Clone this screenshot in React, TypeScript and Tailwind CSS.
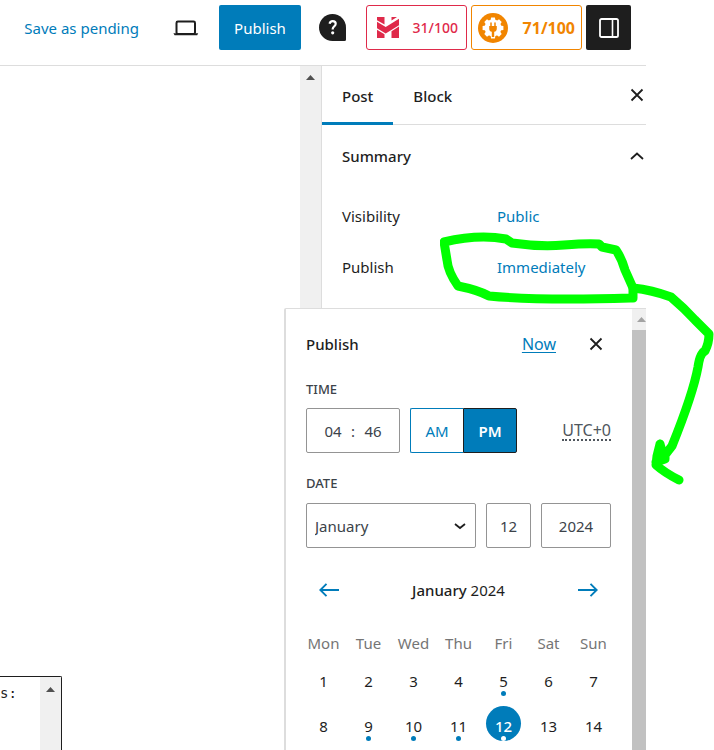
import type { ReactNode } from "react";

const weekdays = ["Mon", "Tue", "Wed", "Thu", "Fri", "Sat", "Sun"];
const days = [1, 2, 3, 4, 5, 6, 7, 8, 9, 10, 11, 12, 13, 14];
const daysWithPosts = [5, 9, 10, 11, 12];
const selectedDay = 12;

const months = [
  "January",
  "February",
  "March",
  "April",
  "May",
  "June",
  "July",
  "August",
  "September",
  "October",
  "November",
  "December",
];

const gearTeeth = [0, 45, 90, 135, 180, 225, 270, 315];

function ScrollArrow({ className = "text-[#505050]" }: { className?: string }) {
  return (
    <svg width="9" height="5" viewBox="0 0 9 5" className={className} fill="currentColor" aria-hidden="true">
      <path d="M4.5 0 9 5H0z" />
    </svg>
  );
}

function CloseIcon() {
  return (
    <svg width="14" height="14" viewBox="0 0 14 14" fill="none" stroke="#1e1e1e" strokeWidth="1.8" aria-hidden="true">
      <path d="M1.5 1.5l11 11M12.5 1.5l-11 11" />
    </svg>
  );
}

function ArrowIcon({ flip = false }: { flip?: boolean }) {
  return (
    <svg
      width="20"
      height="14"
      viewBox="0 0 20 14"
      fill="none"
      stroke="#007cba"
      strokeWidth="1.9"
      className={flip ? "rotate-180" : ""}
      aria-hidden="true"
    >
      <path d="M20 7H1.5M7.5 .8 1.3 7l6.2 6.2" />
    </svg>
  );
}

function LaptopIcon() {
  return (
    <svg width="26" height="16" viewBox="0 0 26 16" aria-hidden="true">
      <rect x="3.5" y="1.5" width="18.5" height="12.5" rx="1.4" fill="none" stroke="#1e1e1e" strokeWidth="2" />
      <path d="M.4 13.2h24.8l-1 2H1.6z" fill="#1e1e1e" />
    </svg>
  );
}

function HelpIcon() {
  return (
    <svg width="27" height="27" viewBox="0 0 27 27" aria-hidden="true">
      <path d="M13.5 0A13.5 13.5 0 0 1 27 13.5V25.5a1.5 1.5 0 0 1-1.5 1.5h-12a13.5 13.5 0 0 1 0-27z" fill="#1e1e1e" />
      <path
        d="M10.6 9.8c.3-1.7 1.4-2.6 3.1-2.6 1.8 0 3 1 3 2.6 0 1.2-.6 1.9-1.5 2.6-1 .8-1.5 1.3-1.5 2.6v.6"
        fill="none"
        stroke="#fff"
        strokeWidth="2.2"
      />
      <circle cx="13.7" cy="18.8" r="1.6" fill="#fff" />
    </svg>
  );
}

function HeadlineIcon() {
  return (
    <svg width="22" height="21" viewBox="0 0 22 21" fill="#df2a4a" aria-hidden="true">
      <path d="M0 0h7.5v7.6L0 3.2z" />
      <path d="M14.5 0H20l-5.5 3.4z" />
      <path d="M0 4.8l8.7 5.2L22 1.8v6.4L8.7 16.4 0 11.2z" />
      <path d="M0 12.8l7.5 4.5V21H0z" />
      <path d="M14.5 14.2 22 9.6V21h-7.5z" />
    </svg>
  );
}

function SeoGearIcon() {
  return (
    <svg width="30" height="30" viewBox="0 0 30 30" aria-hidden="true">
      <circle cx="15" cy="15" r="15" fill="#f18500" />
      <g fill="#fff">
        <circle cx="15" cy="15" r="8.4" />
        {gearTeeth.map((angle) => (
          <path key={angle} d="M12.4 8l.7-3.4h3.8l.7 3.4z" transform={`rotate(${angle} 15 15)`} />
        ))}
      </g>
      <path d="M13 10v4M17 10v4" stroke="#f18500" strokeWidth="1.5" strokeLinecap="round" />
      <path d="M11.2 13h7.6v2.4a3.4 3.4 0 0 1-2.6 3.4V24h-2.4v-5.2a3.4 3.4 0 0 1-2.6-3.4z" fill="#f18500" />
    </svg>
  );
}

function SettingsPanelIcon() {
  return (
    <svg width="20" height="20" viewBox="0 0 20 20" fill="none" stroke="#fff" aria-hidden="true">
      <rect x="1" y="1" width="18" height="18" rx="1.6" strokeWidth="1.8" />
      <path d="M13.5 1v18" strokeWidth="1.6" />
    </svg>
  );
}

function SummaryRow({ label, children }: { label: string; children: ReactNode }) {
  return (
    <div className="flex h-[51px] items-center">
      <span className="w-[155px]">{label}</span>
      <button type="button" className="text-[#007cba]">
        {children}
      </button>
    </div>
  );
}

function EditorHeader() {
  return (
    <header className="flex h-[66px] items-start justify-end border-b border-[#ddd] pt-[5px] pr-[15px]">
      <div className="flex h-[45px] items-center">
        <button type="button" className="text-[#007cba]">
          Save as pending
        </button>
        <button type="button" aria-label="Preview" className="ml-[34px]">
          <LaptopIcon />
        </button>
        <button type="button" className="ml-5 h-[45px] w-[82px] rounded-[2px] bg-[#007cba] text-white">
          Publish
        </button>
        <button type="button" aria-label="Help" className="ml-[18px]">
          <HelpIcon />
        </button>
        <button
          type="button"
          className="ml-5 flex h-[45px] w-[101px] items-center justify-between rounded-[3px] border border-[#df2a4a] pr-2 pl-2.5 text-sm font-medium text-[#df2a4a]"
        >
          <HeadlineIcon />
          31/100
        </button>
        <button
          type="button"
          className="ml-1 flex h-[45px] w-[111px] items-center justify-between rounded-[3px] border border-[#f18500] px-1.5 text-base font-bold text-[#f18500]"
        >
          <SeoGearIcon />
          71/100
        </button>
        <button
          type="button"
          aria-label="Settings"
          className="ml-1 flex h-[45px] w-[45px] items-center justify-center rounded-[2px] bg-[#1e1e1e]"
        >
          <SettingsPanelIcon />
        </button>
      </div>
    </header>
  );
}

function PublishPopover() {
  const field = "h-[45px] rounded-[2px] border border-[#949494]";

  return (
    <section
      aria-label="Publish"
      className="absolute top-[242px] right-0 bottom-0 flex w-[362px] overflow-hidden rounded-tl-[2px] border-t border-l-2 border-[#ddd] bg-white"
    >
      <div className="flex-1 pr-[21px] pl-5">
        <div className="flex h-[70px] items-center">
          <h2 className="flex-1 font-medium">Publish</h2>
          <button type="button" className="mr-[33px] text-base text-[#007cba] underline underline-offset-2">
            Now
          </button>
          <button type="button" aria-label="Close" className="mr-2">
            <CloseIcon />
          </button>
        </div>

        <fieldset>
          <legend className="h-[29px] text-[13px] leading-[20px] font-medium text-[#3c434a]">TIME</legend>
          <div className="flex items-center">
            <div className={`${field} flex w-[94px] items-center justify-center text-[#3c434a]`}>
              <input aria-label="Hours" defaultValue="04" className="w-8 text-center" />
              <span className="w-2 text-center">:</span>
              <input aria-label="Minutes" defaultValue="46" className="w-8 text-center" />
            </div>
            <div className="ml-2.5 flex h-[45px] w-[107px]">
              <button type="button" className="flex-1 rounded-l-[2px] border border-r-0 border-[#007cba] text-[#007cba]">
                AM
              </button>
              <button
                type="button"
                className="flex-1 rounded-r-[2px] border border-[#1e1e1e] bg-[#007cba] font-semibold text-white"
              >
                PM
              </button>
            </div>
            <abbr
              title="Coordinated Universal Time"
              className="ml-auto border-b-2 border-dotted border-[#50575e] text-base leading-[18px] text-[#50575e] no-underline"
            >
              UTC+0
            </abbr>
          </div>
        </fieldset>

        <fieldset className="mt-5">
          <legend className="h-[30px] text-[13px] leading-[20px] font-medium text-[#3c434a]">DATE</legend>
          <div className="flex gap-2.5 text-[#3c434a]">
            <div className="relative flex-1">
              <select aria-label="Month" defaultValue="January" className={`${field} w-full appearance-none bg-white px-2`}>
                {months.map((month) => (
                  <option key={month}>{month}</option>
                ))}
              </select>
              <svg
                width="12"
                height="7"
                viewBox="0 0 12 7"
                className="pointer-events-none absolute top-5 right-2.5"
                fill="none"
                stroke="#1e1e1e"
                strokeWidth="1.8"
                aria-hidden="true"
              >
                <path d="M1 1l5 4 5-4" />
              </svg>
            </div>
            <input aria-label="Day" defaultValue="12" className={`${field} w-[45px] text-center`} />
            <input aria-label="Year" defaultValue="2024" className={`${field} w-[70px] text-center`} />
          </div>
        </fieldset>

        <div className="mt-5 flex h-11 items-center justify-between px-[13px]">
          <button type="button" aria-label="Previous month">
            <ArrowIcon />
          </button>
          <h3>
            <strong className="font-medium">January</strong> 2024
          </h3>
          <button type="button" aria-label="Next month">
            <ArrowIcon flip />
          </button>
        </div>

        <div className="mt-[23px] grid grid-cols-[repeat(7,35px)] justify-between gap-y-2.5">
          {weekdays.map((weekday) => (
            <span key={weekday} className="flex h-4 items-center justify-center text-[#757575]">
              {weekday}
            </span>
          ))}
          {days.map((day) => (
            <button
              key={day}
              type="button"
              className={`relative flex h-[35px] items-center justify-center rounded-full pt-1 ${
                day === selectedDay ? "bg-[#007cba] font-medium text-white" : ""
              }`}
            >
              {day}
              {daysWithPosts.includes(day) && (
                <span
                  className={`absolute bottom-0 left-[15px] size-[5px] rounded-full ${
                    day === selectedDay ? "bg-white" : "bg-[#007cba]"
                  }`}
                />
              )}
            </button>
          ))}
        </div>
      </div>

      <div className="flex w-[14px] flex-col bg-[#f0f0f0]">
        <span className="flex h-[21px] items-center justify-center pl-1">
          <ScrollArrow className="text-[#a3a3a3]" />
        </span>
        <span className="flex-1 bg-[#c1c1c1]" />
      </div>
    </section>
  );
}

function SettingsSidebar() {
  return (
    <aside className="w-[325px] border-l border-[#ddd]">
      <div className="flex h-[59px] items-stretch border-b border-[#ddd]">
        <button type="button" className="-mb-px border-b-[3px] border-[#007cba] px-5 pt-[3px] font-medium">
          Post
        </button>
        <button type="button" className="px-5 pt-0.5 font-medium">
          Block
        </button>
        <button type="button" aria-label="Close settings" className="mr-0.5 ml-auto">
          <CloseIcon />
        </button>
      </div>
      <div className="pr-0.5 pl-5">
        <button type="button" className="flex h-[65px] w-full items-center justify-between pb-1 font-medium">
          Summary
          <svg width="14" height="8" viewBox="0 0 14 8" fill="none" stroke="#1e1e1e" strokeWidth="1.8" aria-hidden="true">
            <path d="M1 7l6-5.5L13 7" />
          </svg>
        </button>
        <SummaryRow label="Visibility">Public</SummaryRow>
        <SummaryRow label="Publish">Immediately</SummaryRow>
      </div>
    </aside>
  );
}

function Annotation() {
  return (
    <svg
      width="274"
      height="254"
      viewBox="440 232 274 254"
      className="pointer-events-none absolute top-[232px] right-0"
      fill="none"
      stroke="#00ff00"
      strokeWidth="9"
      strokeLinecap="round"
      strokeLinejoin="round"
      aria-hidden="true"
    >
      <path d="M444 242Q478 234 506 239L512 243Q540 247 564 245T599 244L602 247L616 250Q622 259 625 270L633 288V298C600 299 540 301 489 296Q478 290 458 286Q448 272 447 260L444 242" />
      <path d="M633 288Q652 290 671 297Q684 308 695 320L709 334Q709 343 705 351Q700 353 698 367Q693 394 672 446L665 455V459L656 462M660 444L657 456L656 465Q665 473 679 480M660 444L664 459" />
    </svg>
  );
}

export default function App() {
  return (
    <div className="relative min-h-screen overflow-hidden bg-white pr-[68px] font-['Noto_Sans','Segoe_UI',sans-serif] text-[15px] leading-5 text-[#1e1e1e]">
      <div className="flex min-h-screen flex-col">
        <EditorHeader />
        <div className="relative flex flex-1">
          <main className="flex flex-1 items-end">
            <div className="flex h-[74px] w-[62px] justify-end rounded-tr-[2px] border-t border-r border-[#1e1e1e]">
              <code className="flex-1 pt-1.5 font-['DejaVu_Sans_Mono',monospace] text-[14px]">s:</code>
              <div className="flex w-[21px] justify-center bg-[#f0f0f0] pt-2.5">
                <ScrollArrow />
              </div>
            </div>
          </main>
          <div className="flex w-[21px] justify-center bg-[#f0f0f0] pt-[9px]">
            <ScrollArrow />
          </div>
          <SettingsSidebar />
          <PublishPopover />
        </div>
      </div>
      <Annotation />
    </div>
  );
}
